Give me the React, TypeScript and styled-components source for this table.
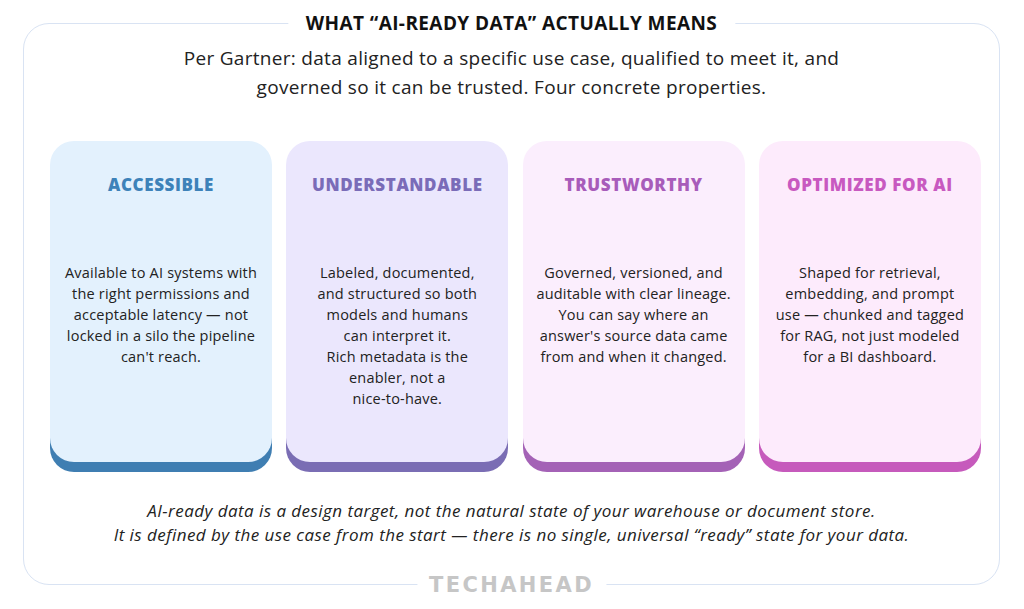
import React from 'react';
import styled, { createGlobalStyle } from 'styled-components';

const GlobalStyle = createGlobalStyle`
    html, body {
        margin: 0;
        padding: 0;
        background: #ffffff;
    }
    body {
        font-family: 'Open Sans', 'Liberation Sans', sans-serif;
        color: #1f1f1f;
    }
`;

const StyledPage = styled.div`
    width: 1024px;
    height: 609px;
    padding: 23px 0 0 23px;
    box-sizing: border-box;
`;

const StyledFrame = styled.section`
    position: relative;
    width: 977px;
    height: 562px;
    box-sizing: border-box;
    border: 1.5px solid #d9e3f3;
    border-radius: 26px;
    padding: 20px 0 0 26px;
    display: flex;
    flex-direction: column;
    align-items: flex-start;
`;

const StyledHeading = styled.h1`
    position: absolute;
    top: -12px;
    left: 50%;
    transform: translateX(-50%);
    margin: 0;
    padding: 0 18px;
    background: #ffffff;
    font-size: 19px;
    line-height: 22px;
    font-weight: 700;
    color: #111111;
    white-space: nowrap;
    letter-spacing: 0.4px;
`;

const StyledIntro = styled.p`
    width: 923px;
    margin: 0;
    text-align: center;
    font-size: 19px;
    line-height: 29px;
    letter-spacing: 0.3px;
    color: #222222;
`;

const StyledCardRow = styled.div`
    display: grid;
    grid-template-columns: repeat(4, 222px);
    column-gap: 14.3px;
    margin-top: 39px;
`;

type Tone = {
    face: string;
    edge: string;
    ink: string;
};

const StyledCard = styled.article<{ $tone: Tone }>`
    height: 321px;
    box-sizing: border-box;
    padding-top: 34px;
    border-radius: 24px;
    background: ${(p) => p.$tone.face};
    box-shadow: 0 10px 0 0 ${(p) => p.$tone.edge};
    display: flex;
    flex-direction: column;
    align-items: center;
`;

const StyledCardTitle = styled.h2<{ $ink: string }>`
    margin: 0;
    font-size: 17px;
    line-height: 20px;
    font-weight: 800;
    letter-spacing: 0.6px;
    color: ${(p) => p.$ink};
`;

const StyledCardText = styled.p`
    margin: 67px 0 0;
    text-align: center;
    font-size: 14.5px;
    line-height: 21px;
    letter-spacing: 0.2px;
    color: #222222;
    white-space: nowrap;
`;

const StyledFootnote = styled.p`
    width: 923px;
    margin: 37px 0 0;
    text-align: center;
    font-style: italic;
    font-size: 17px;
    line-height: 24px;
    letter-spacing: 0.45px;
    color: #222222;
    white-space: nowrap;
`;

const StyledBrand = styled.div`
    position: absolute;
    bottom: -12px;
    left: 50%;
    transform: translateX(-50%);
    padding: 0 12px;
    background: #ffffff;
    font-family: 'DejaVu Sans', 'Liberation Sans', sans-serif;
    font-size: 21px;
    line-height: 22px;
    font-weight: 700;
    letter-spacing: 2.4px;
    color: #c6c6c6;
    white-space: nowrap;
`;

type Property = {
    title: string;
    lines: string[];
    tone: Tone;
};

const properties: Property[] = [
    {
        title: 'ACCESSIBLE',
        lines: [
            'Available to AI systems with',
            'the right permissions and',
            'acceptable latency \u2014 not',
            'locked in a silo the pipeline',
            "can't reach.",
        ],
        tone: { face: '#e3f1fd', edge: '#3f7eb2', ink: '#3d82b9' },
    },
    {
        title: 'UNDERSTANDABLE',
        lines: [
            'Labeled, documented,',
            'and structured so both',
            'models and humans',
            'can interpret it.',
            'Rich metadata is the',
            'enabler, not a',
            'nice-to-have.',
        ],
        tone: { face: '#ebe7fd', edge: '#7a6db4', ink: '#7a6cb8' },
    },
    {
        title: 'TRUSTWORTHY',
        lines: [
            'Governed, versioned, and',
            'auditable with clear lineage.',
            'You can say where an',
            "answer's source data came",
            'from and when it changed.',
        ],
        tone: { face: '#fbeefd', edge: '#a462b6', ink: '#a85cba' },
    },
    {
        title: 'OPTIMIZED FOR AI',
        lines: [
            'Shaped for retrieval,',
            'embedding, and prompt',
            'use \u2014 chunked and tagged',
            'for RAG, not just modeled',
            'for a BI dashboard.',
        ],
        tone: { face: '#fdebfc', edge: '#c65abc', ink: '#c859c0' },
    },
];

const PropertyCard = ({ data }: { data: Property }) => (
    <StyledCard $tone={data.tone}>
        <StyledCardTitle $ink={data.tone.ink}>{data.title}</StyledCardTitle>
        <StyledCardText>
            {data.lines.map((line, i) => (
                <React.Fragment key={i}>
                    {line}
                    {i < data.lines.length - 1 && <br />}
                </React.Fragment>
            ))}
        </StyledCardText>
    </StyledCard>
);

export default function App() {
    return (
        <>
            <GlobalStyle />
            <StyledPage>
                <StyledFrame>
                    <StyledHeading>WHAT {'\u201C'}AI-READY DATA{'\u201D'} ACTUALLY MEANS</StyledHeading>
                    <StyledIntro>
                        Per Gartner: data aligned to a specific use case, qualified to meet it, and
                        <br />
                        governed so it can be trusted. Four concrete properties.
                    </StyledIntro>
                    <StyledCardRow>
                        {properties.map((p) => (
                            <PropertyCard key={p.title} data={p} />
                        ))}
                    </StyledCardRow>
                    <StyledFootnote>
                        AI-ready data is a design target, not the natural state of your warehouse or document store.
                        <br />
                        It is defined by the use case from the start {'\u2014'} there is no single, universal{' '}
                        {'\u201C'}ready{'\u201D'} state for your data.
                    </StyledFootnote>
                    <StyledBrand>TECHAHEAD</StyledBrand>
                </StyledFrame>
            </StyledPage>
        </>
    );
}
